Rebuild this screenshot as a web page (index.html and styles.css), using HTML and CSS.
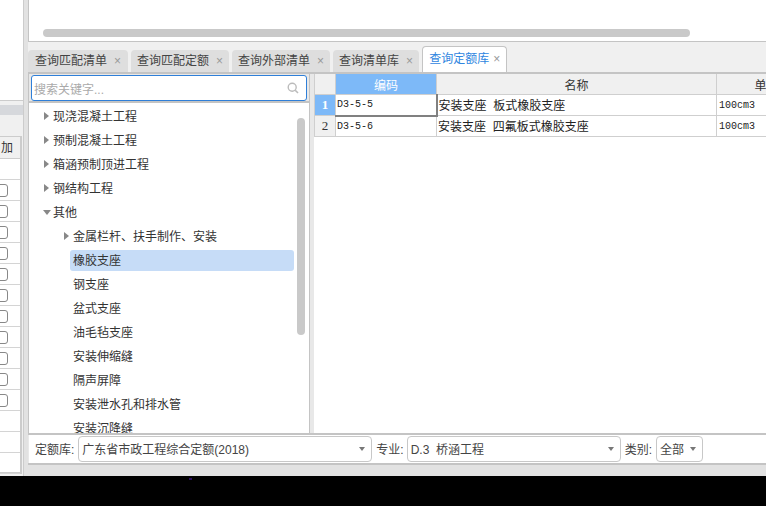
FILE: index.html
```html
<!DOCTYPE html>
<html lang="zh-CN">
<head>
<meta charset="utf-8">
<title>查询定额库</title>
<link rel="stylesheet" href="styles.css">
</head>
<body>
<div class="screen">
  <aside class="side">
    <div class="side-top"></div>
    <div class="side-bar"></div>
    <div class="side-gap"></div>
    <div class="side-table">
      <div class="side-head">加</div>
      <div class="side-row"></div>
      <div class="side-row"><span class="check"></span></div>
      <div class="side-row"><span class="check"></span></div>
      <div class="side-row"><span class="check"></span></div>
      <div class="side-row"><span class="check"></span></div>
      <div class="side-row"><span class="check"></span></div>
      <div class="side-row"><span class="check"></span></div>
      <div class="side-row"><span class="check"></span></div>
      <div class="side-row"><span class="check"></span></div>
      <div class="side-row"><span class="check"></span></div>
      <div class="side-row"><span class="check"></span></div>
      <div class="side-row"><span class="check"></span></div>
      <div class="side-row"></div>
      <div class="side-row"></div>
      <div class="side-row"></div>
    </div>
  </aside>
  <main class="main">
    <section class="top-pane"><div class="hscroll"></div></section>
    <nav class="tabs">
      <div class="tab first">查询匹配清单<span class="x">×</span></div>
      <div class="tab">查询匹配定额<span class="x">×</span></div>
      <div class="tab">查询外部清单<span class="x">×</span></div>
      <div class="tab">查询清单库<span class="x">×</span></div>
      <div class="tab active">查询定额库<span class="x">×</span></div>
    </nav>
    <section class="panel">
      <div class="content">
        <div class="left">
          <div class="search-wrap">
            <div class="search">
              <span class="placeholder">搜索关键字...</span>
              <svg class="search-icon" width="12" height="12" viewBox="0 0 12 12"><circle cx="5.2" cy="5.2" r="4" fill="none" stroke="#bbb" stroke-width="1.4"/><path d="M8.2 8.2 11 11" stroke="#bbb" stroke-width="1.6"/></svg>
            </div>
          </div>
          <div class="tree-wrap">
            <ul class="tree">
              <li class="node"><span class="arrow"></span>现浇混凝土工程</li>
              <li class="node"><span class="arrow"></span>预制混凝土工程</li>
              <li class="node"><span class="arrow"></span>箱涵预制顶进工程</li>
              <li class="node"><span class="arrow"></span>钢结构工程</li>
              <li class="node"><span class="arrow open"></span>其他</li>
              <li class="node sub"><span class="arrow"></span>金属栏杆、扶手制作、安装</li>
              <li class="node leaf selected"><span class="label">橡胶支座</span></li>
              <li class="node leaf"><span class="label">钢支座</span></li>
              <li class="node leaf"><span class="label">盆式支座</span></li>
              <li class="node leaf"><span class="label">油毛毡支座</span></li>
              <li class="node leaf"><span class="label">安装伸缩缝</span></li>
              <li class="node leaf"><span class="label">隔声屏障</span></li>
              <li class="node leaf"><span class="label">安装泄水孔和排水管</span></li>
              <li class="node leaf"><span class="label">安装沉降缝</span></li>
            </ul>
            <div class="vthumb"></div>
          </div>
        </div>
        <div class="grid-area">
          <table class="grid">
            <colgroup><col class="c0"><col class="c1"><col class="c2"><col class="c3"></colgroup>
            <tr>
              <th></th><th class="hl">编码</th><th>名称</th><th>单位</th>
            </tr>
            <tr>
              <th class="hl rn">1</th><td class="mono current">D3-5-5</td><td class="name">安装支座&nbsp;&nbsp;板式橡胶支座</td><td class="mono unit">100cm3</td>
            </tr>
            <tr>
              <th class="rn">2</th><td class="mono">D3-5-6</td><td class="name">安装支座&nbsp;&nbsp;四氟板式橡胶支座</td><td class="mono unit">100cm3</td>
            </tr>
          </table>
        </div>
      </div>
      <footer class="filters">
        <label class="flabel">定额库:</label>
        <div class="select s-lib"><span class="val">广东省市政工程综合定额(2018)</span><i class="caret"></i></div>
        <label class="flabel">专业:</label>
        <div class="select s-major"><span class="val">D.3&nbsp;&nbsp;桥涵工程</span><i class="caret"></i></div>
        <label class="flabel">类别:</label>
        <div class="select s-type"><span class="val">全部</span><i class="caret"></i></div>
      </footer>
    </section>
  </main>
</div>
<div class="black"><span class="speck"></span></div>
</body>
</html>
```
FILE: styles.css
```css
* { box-sizing: border-box; }
html, body { margin: 0; padding: 0; }
body {
  width: 766px;
  height: 506px;
  overflow: hidden;
  font-family: "Liberation Sans", "Noto Sans CJK SC", sans-serif;
  font-size: 12px;
  color: #333;
  background: #000;
}
.screen {
  display: flex;
  height: 476px;
  background: #e2e2e2;
  overflow: hidden;
}
.side {
  width: 24px;
  flex: none;
  background: #f0f0f0;
  display: flex;
  flex-direction: column;
  border-right: 1px solid #ccc;
}
.side-top { height: 101px; background: #fff; border-bottom: 1px solid #ccc; }
.side-bar { height: 10px; margin-top: 4px; background: #d6d8dc; }
.side-gap { height: 21px; }
.side-table {
  width: 22px;
  height: 338px;
  background: #fff;
  border: solid #ccc;
  border-width: 1px 2px 2px 0;
}
.side-head {
  height: 22px;
  padding-top: 1px;
  background: #f0f0f0;
  border-bottom: 1px solid #ccc;
  line-height: 21px;
  text-indent: 1px;
}
.side-row {
  height: 21px;
  border-bottom: 1px solid #d4d4d4;
  display: flex;
  align-items: center;
}
.check {
  display: block;
  width: 13px;
  height: 13px;
  margin-left: -5px;
  border: 1px solid #888;
  border-radius: 3px;
  background: #fff;
}
.main {
  flex: 1;
  min-width: 0;
  padding-left: 4px;
  display: flex;
  flex-direction: column;
}
.top-pane {
  height: 42px;
  background: #fff;
  border-left: 1px solid #c4c4c4;
  border-bottom: 1px solid #c4c4c4;
  padding: 29px 0 0 14px;
}
.hscroll {
  width: 647px;
  height: 8px;
  border-radius: 4px;
  background: #c9c9c9;
}
.tabs {
  height: 30px;
  background: #f0f0f0;
  display: flex;
  align-items: flex-end;
  gap: 3px;
}
.tab {
  height: 22px;
  padding: 0 6px;
  background: #dedede;
  border-radius: 4px 4px 0 0;
  line-height: 22px;
  color: #444;
  white-space: nowrap;
}
.tab.first { padding: 0 7px; }
.tab .x {
  margin-left: 7px;
  color: #999;
}
.tab.active {
  height: 26px;
  background: #fff;
  color: #2f86e0;
  border: 1px solid #c4c4c4;
  border-bottom: 0;
  line-height: 25px;
}
.tab.active .x { margin-left: 4px; }
.panel {
  flex: 1;
  display: flex;
  flex-direction: column;
  min-height: 0;
  border-top: 2px solid #c4c4c4;
}
.content {
  height: 361px;
  display: flex;
  background: #fff;
  border-left: 1px solid #c4c4c4;
  border-bottom: 2px solid #c4c4c4;
}
.left {
  width: 281px;
  flex: none;
  display: flex;
  flex-direction: column;
  min-height: 0;
  border-right: 1px solid #c4c4c4;
}
.search-wrap {
  height: 29px;
  flex: none;
  background: #e8e8e8;
  border-bottom: 2px solid #c4c4c4;
  padding: 1px 2px 0;
}
.search {
  height: 26px;
  background: #fff;
  border: 1px solid #2f7fd8;
  border-radius: 3px;
  display: flex;
  align-items: center;
  justify-content: space-between;
  padding: 0 7px 0 2px;
}
.placeholder { color: #aaa; }
.tree-wrap {
  flex: 1;
  min-height: 0;
  overflow: hidden;
  display: flex;
}
.tree {
  list-style: none;
  margin: 0;
  padding: 2px 0 0;
  width: 267px;
  flex: none;
}
.node {
  position: relative;
  height: 24px;
  line-height: 24px;
  padding-left: 24px;
  white-space: nowrap;
  color: #333;
}
.node.sub { padding-left: 44px; }
.arrow {
  position: absolute;
  left: 15px;
  top: 7px;
  width: 0;
  height: 0;
  border-style: solid;
  border-width: 4px 0 4px 5px;
  border-color: transparent transparent transparent #888;
}
.node.sub .arrow { left: 35px; }
.arrow.open {
  left: 14px;
  top: 9px;
  border-width: 5px 4px 0 4px;
  border-color: #888 transparent transparent transparent;
}
.node.leaf { padding: 1px 2px 0 41px; }
.label {
  display: block;
  height: 21px;
  line-height: 23px;
  padding-left: 3px;
  border-radius: 3px;
}
.selected .label { background: #c6dcf7; }
.vthumb {
  width: 8px;
  height: 217px;
  margin: 15px 0 0 1px;
  flex: none;
  border-radius: 4px;
  background: #c9c9c9;
}
.grid-area {
  flex: 1;
  min-width: 0;
  overflow: hidden;
  background: #fff;
  border-left: 4px solid #e8e8e8;
}
.grid {
  table-layout: fixed;
  width: 502px;
  border-collapse: collapse;
  margin-top: -1px;
}
.c0 { width: 21px; }
.c1 { width: 101px; }
.c2 { width: 280px; }
.c3 { width: 100px; }
.grid tr { height: 21px; }
.grid th, .grid td {
  padding: 0;
  border: 1px solid #cfcfcf;
  font-weight: 400;
  white-space: nowrap;
  overflow: hidden;
}
.grid th { background: #f0f0f0; text-align: center; color: #333; }
.grid td { padding-left: 1px; color: #222; }
.grid td.name { padding-bottom: 2px; }
.grid td.unit { padding-left: 2px; }
.grid th.hl { background: #7db9f8; color: #fff; }
.grid th.rn { font-family: "Liberation Serif", serif; font-size: 13px; }
.grid th.hl.rn { font-weight: 700; }
.mono { font-family: "Liberation Mono", monospace; font-size: 10px; }
.grid td.current { border-right: 2px solid #808080; border-bottom: 2px solid #808080; }
.filters {
  height: 28px;
  background: #fff;
  border-left: 1px solid #e8e8e8;
  display: flex;
  align-items: center;
  gap: 4px;
  padding-left: 6px;
  box-shadow: 0 2px 0 #c4c4c4;
}
.flabel { color: #444; white-space: nowrap; padding-bottom: 2px; }
.val { padding-bottom: 2px; }
.select {
  height: 26px;
  border: 1px solid #c8c8c8;
  border-radius: 4px;
  background: #fff;
  display: flex;
  align-items: center;
  justify-content: space-between;
  padding: 0 6px 0 3px;
  color: #444;
  flex: none;
}
.caret {
  width: 0;
  height: 0;
  border-style: solid;
  border-width: 4px 3px 0 3px;
  border-color: #777 transparent transparent transparent;
}
.s-lib { width: 294px; }
.s-major { width: 214px; margin-left: -1px; }
.s-type { width: 47px; }
.black {
  height: 30px;
  background: #000;
  position: relative;
}
.speck {
  position: absolute;
  left: 189px;
  top: 2px;
  width: 3px;
  height: 2px;
  background: #2a0f5e;
}
```
